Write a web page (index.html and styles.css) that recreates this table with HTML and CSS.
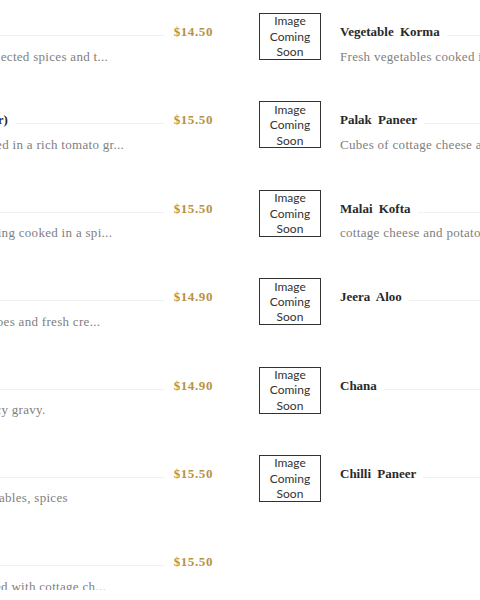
FILE: index.html
```html
<!DOCTYPE html>
<html lang="en">
<head>
<meta charset="utf-8">
<title>Menu</title>
<link rel="stylesheet" href="styles.css">
</head>
<body>
<div class="viewport">
  <div class="menu">
    <div class="item">
      <div class="thumb"><span>Image<br>Coming<br>Soon</span></div>
      <div class="info">
        <div class="head"><span class="title">Dal Tadka</span><span class="leader"></span><span class="price">$14.50</span></div>
        <p class="desc">Dal tempered with selected spices and t...</p>
      </div>
    </div>
    <div class="item">
      <div class="thumb"><span>Image<br>Coming<br>Soon</span></div>
      <div class="info">
        <div class="head"><span class="title">Vegetable Korma</span><span class="leader"></span><span class="price">$14.90</span></div>
        <p class="desc">Fresh vegetables cooked in a mild cashew cream sauce...</p>
      </div>
    </div>
    <div class="item">
      <div class="thumb"><span>Image<br>Coming<br>Soon</span></div>
      <div class="info">
        <div class="head"><span class="title">Shahi Paneer (Butter)</span><span class="leader"></span><span class="price">$15.50</span></div>
        <p class="desc">Cottage cheese, cooked in a rich tomato gr...</p>
      </div>
    </div>
    <div class="item">
      <div class="thumb"><span>Image<br>Coming<br>Soon</span></div>
      <div class="info">
        <div class="head"><span class="title">Palak Paneer</span><span class="leader"></span><span class="price">$15.50</span></div>
        <p class="desc">Cubes of cottage cheese and creamed spinach...</p>
      </div>
    </div>
    <div class="item">
      <div class="thumb"><span>Image<br>Coming<br>Soon</span></div>
      <div class="info">
        <div class="head"><span class="title">Baingan Bharta</span><span class="leader"></span><span class="price">$15.50</span></div>
        <p class="desc">Roasted aubergine being cooked in a spi...</p>
      </div>
    </div>
    <div class="item">
      <div class="thumb"><span>Image<br>Coming<br>Soon</span></div>
      <div class="info">
        <div class="head"><span class="title">Malai Kofta</span><span class="leader"></span><span class="price">$15.50</span></div>
        <p class="desc">cottage cheese and potato dumplings in a creamy sauce...</p>
      </div>
    </div>
    <div class="item">
      <div class="thumb"><span>Image<br>Coming<br>Soon</span></div>
      <div class="info">
        <div class="head"><span class="title">Matar Paneer</span><span class="leader"></span><span class="price">$14.90</span></div>
        <p class="desc">Garden peas in tomatoes and fresh cre...</p>
      </div>
    </div>
    <div class="item">
      <div class="thumb"><span>Image<br>Coming<br>Soon</span></div>
      <div class="info">
        <div class="head"><span class="title">Jeera Aloo</span><span class="leader"></span><span class="price">$13.90</span></div>
      </div>
    </div>
    <div class="item">
      <div class="thumb"><span>Image<br>Coming<br>Soon</span></div>
      <div class="info">
        <div class="head"><span class="title">Chana Masala</span><span class="leader"></span><span class="price">$14.90</span></div>
        <p class="desc">Chickpeas in hot, spicy gravy.</p>
      </div>
    </div>
    <div class="item">
      <div class="thumb"><span>Image<br>Coming<br>Soon</span></div>
      <div class="info">
        <div class="head"><span class="title">Chana</span><span class="leader"></span><span class="price">$13.90</span></div>
      </div>
    </div>
    <div class="item">
      <div class="thumb"><span>Image<br>Coming<br>Soon</span></div>
      <div class="info">
        <div class="head"><span class="title">Vegetable Biryani</span><span class="leader"></span><span class="price">$15.50</span></div>
        <p class="desc">Rice made with vegetables, spices</p>
      </div>
    </div>
    <div class="item">
      <div class="thumb"><span>Image<br>Coming<br>Soon</span></div>
      <div class="info">
        <div class="head"><span class="title">Chilli Paneer</span><span class="leader"></span><span class="price">$15.50</span></div>
      </div>
    </div>
    <div class="item">
      <div class="thumb"><span>Image<br>Coming<br>Soon</span></div>
      <div class="info">
        <div class="head"><span class="title">Methi Paneer</span><span class="leader"></span><span class="price">$15.50</span></div>
        <p class="desc">Fenugreek leaves laced with cottage ch...</p>
      </div>
    </div>
  </div>
</div>
</body>
</html>
```
FILE: styles.css
```css
html, body {
  margin: 0;
  padding: 0;
  background: #ffffff;
}

body {
  width: 480px;
  height: 600px;
  overflow: hidden;
  font-family: "Liberation Serif", "DejaVu Serif", serif;
}

.viewport {
  width: 480px;
  overflow: hidden;
}

.menu {
  display: grid;
  grid-template-columns: 414px 414px;
  column-gap: 46px;
  row-gap: 41.4px;
  width: 874px;
  margin-left: -201px;
  padding-top: 13px;
}

.item {
  display: flex;
  align-items: flex-start;
  height: 47px;
}

.thumb {
  flex: none;
  box-sizing: border-box;
  width: 62px;
  height: 47px;
  margin-right: 19px;
  border: 1.5px solid #333333;
  display: flex;
  align-items: center;
  justify-content: center;
  text-align: center;
  font-family: Lato, "Open Sans", sans-serif;
  font-size: 12px;
  line-height: 15.4px;
  color: #333333;
}

.info {
  flex: 1;
  min-width: 0;
  padding-top: 10px;
}

.head {
  display: flex;
  align-items: flex-start;
  line-height: 18px;
}

.title {
  flex: none;
  font-size: 13px;
  font-weight: 700;
  color: #2a2a2a;
  word-spacing: 3px;
  white-space: nowrap;
}

.leader {
  flex: 1;
  height: 1px;
  margin: 12px 10px 0 7px;
  background: #f0f0f0;
}

.price {
  flex: none;
  font-size: 13px;
  font-weight: 700;
  letter-spacing: 0.6px;
  color: #b8923f;
}

.desc {
  margin: 6.5px 0 0;
  font-size: 13px;
  line-height: 18px;
  letter-spacing: 0.3px;
  color: #808080;
  white-space: nowrap;
}
```
